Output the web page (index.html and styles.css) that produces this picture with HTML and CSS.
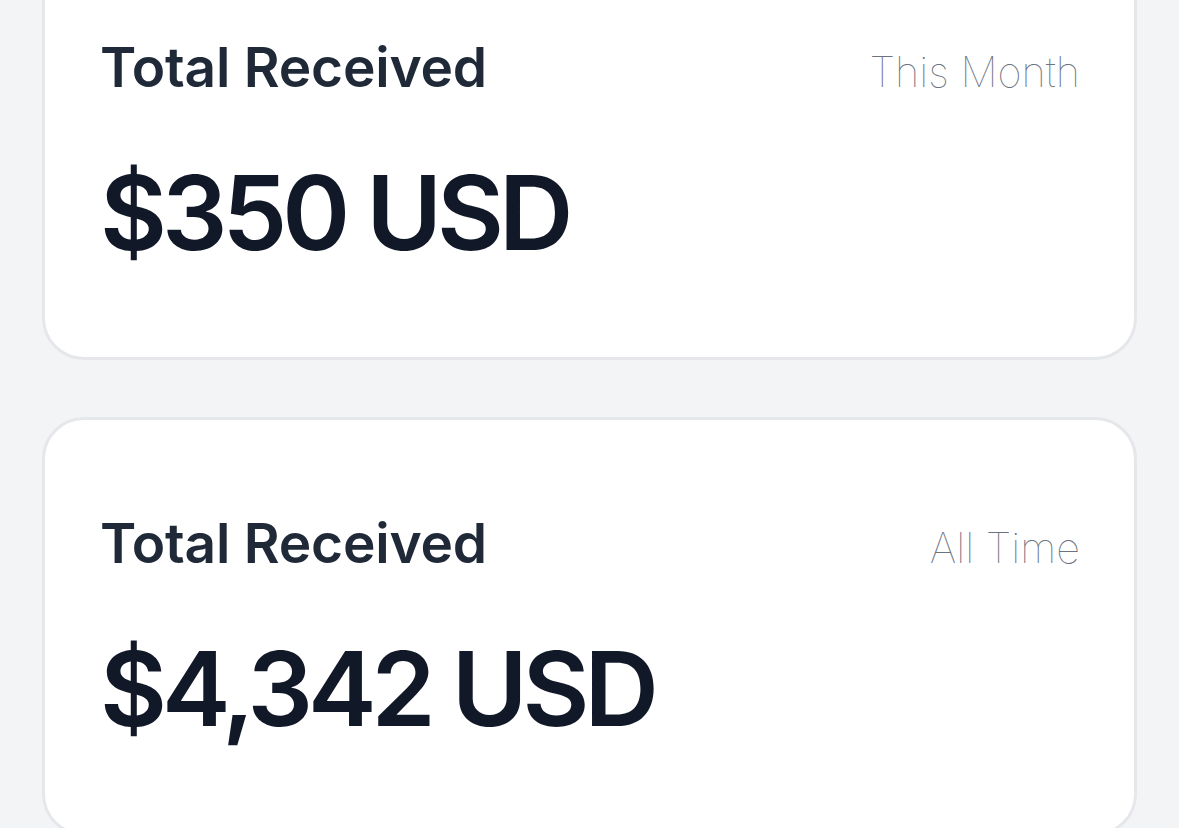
FILE: index.html
```html
<!DOCTYPE html>
<html lang="en">
<head>
<meta charset="utf-8">
<title>Totals</title>
<link rel="stylesheet" href="styles.css">
</head>
<body>
<main class="list">
  <section class="card card-first">
    <div class="card-head">
      <h2 class="card-title">Total Received</h2>
      <span class="card-period">This Month</span>
    </div>
    <p class="card-amount">$350 USD</p>
  </section>
  <section class="card">
    <div class="card-head">
      <h2 class="card-title">Total Received</h2>
      <span class="card-period">All Time</span>
    </div>
    <p class="card-amount">$4,342 USD</p>
  </section>
</main>
</body>
</html>
```
FILE: styles.css
```css
html, body {
  margin: 0;
  padding: 0;
  background: #f3f4f6;
  font-family: Inter, "Noto Sans", sans-serif;
}

.list {
  display: flex;
  flex-direction: column;
  gap: 57px;
  padding: 0 42px;
  margin-top: -59px;
}

.card {
  background: #ffffff;
  border: 3px solid #e5e7eb;
  border-radius: 42px;
  padding: 96px 54px 93px 55px;
}

.card-head {
  display: flex;
  justify-content: space-between;
  align-items: baseline;
}

.card-title {
  margin: 0;
  font-size: 55px;
  line-height: 1;
  font-weight: 600;
  color: #1f2937;
  letter-spacing: -0.2px;
}

.card-period {
  font-size: 41.5px;
  line-height: 1;
  font-weight: 100;
  color: #6b7280;
}

.card-amount {
  margin: 66px 0 0 0;
  font-size: 103px;
  line-height: 1;
  font-weight: 600;
  color: #111827;
  letter-spacing: -5px;
}
```
